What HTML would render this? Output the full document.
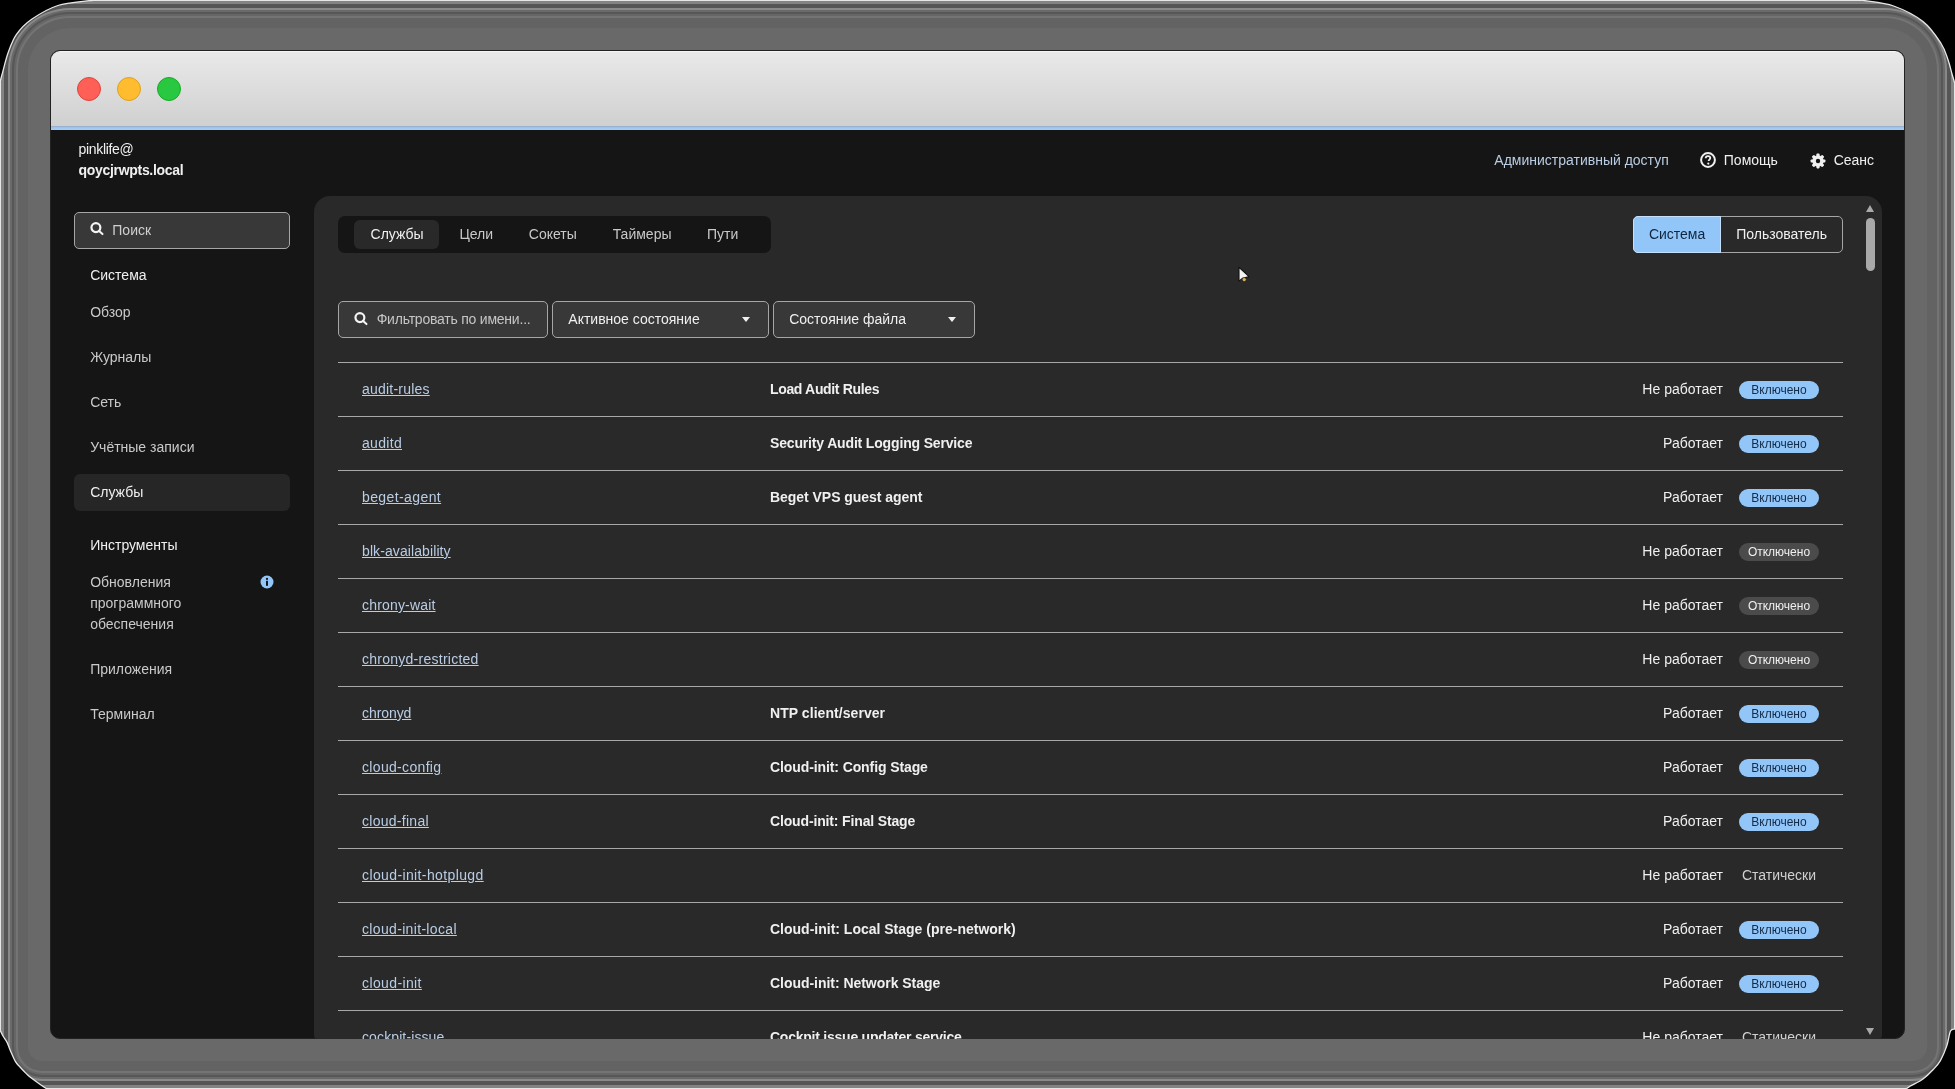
<!DOCTYPE html>
<html><head><meta charset="utf-8">
<style>
*{box-sizing:border-box;margin:0;padding:0}
html,body{width:1955px;height:1089px;overflow:hidden;background:#000;font-family:"Liberation Sans",sans-serif;font-size:14px}
#frame{position:absolute;left:0;top:0;width:1955px;height:1089px;border-radius:70px 70px 42px 42px;background:#696969;
 box-shadow:inset 0 0 0 1px #e6e6e6,inset 0 0 0 4px #838383,inset 0 0 0 8px #555,inset 0 0 0 10px #898989,inset 0 0 0 12px #6a6a6a,inset 0 0 0 14px #575757,inset 0 0 0 16px #666,inset 0 0 0 18px #747474,inset 0 0 0 28px #636363}
#win{position:absolute;left:50px;top:50px;width:1855px;height:989px;border-radius:10px;overflow:hidden;background:#151515;border:1px solid #222}
#title{position:absolute;left:0;top:0;width:100%;height:75px;background:linear-gradient(#e9e9e9,#d0d0d0);border-top:1px solid #f6f6f6}
#blue{position:absolute;left:0;top:75px;width:100%;height:4px;background:linear-gradient(#97a9c2,#9ec4ee 40%,#a6cefc)}
.tl{position:absolute;top:25px;width:24px;height:24px;border-radius:50%}
#app{will-change:transform;position:absolute;left:0;top:0;width:1955px;height:1089px;clip-path:inset(130px 50px 50px 50px round 0 0 10px 10px)}
.t{position:absolute;white-space:nowrap;line-height:16px;color:#f0f0f0}
.b{font-weight:bold}
.g{color:#c9c9c9}
.lnk{color:#b9cde4;text-decoration:underline;text-underline-offset:1px}
.box{position:absolute}
.panel{position:absolute;left:314px;top:196px;width:1568px;height:843px;background:#292929;border-radius:16px 16px 4px 4px}
.inp{position:absolute;border:1px solid #a6a6a6;border-radius:5px;background:#383838}
.line{position:absolute;left:338px;width:1505px;height:1px;background:#a8a8a8}
.badge{position:absolute;left:1739px;width:80px;height:18px;border-radius:9px;font-size:12px;line-height:18px;text-align:center}
.on{background:#92c5f8;color:#142c48}
.off{background:#4b4b4b;color:#f0f0f0}
.st{color:#d0d0d0;font-size:14px;line-height:16px;height:16px}
.caret{position:absolute;width:0;height:0;border-left:4.5px solid transparent;border-right:4.5px solid transparent;border-top:5px solid #f0f0f0}
</style></head>
<body>
<div id="frame"></div><svg style="position:absolute;left:0;top:0" width="1955" height="1089"><path d="M0.0 82.0 C0.5 80.3 1.4 76.5 2.8 71.6 C4.2 66.6 6.0 58.5 8.3 52.3 C10.6 46.1 12.6 39.9 16.5 34.4 C20.4 28.9 24.8 24.1 31.7 19.3 C38.6 14.5 48.3 8.6 57.9 5.5 C67.5 2.4 83.2 1.6 89.5 0.7 C95.8 -0.2 94.9 0.1 96.0 0.0  L0 0 Z" fill="#000"/><path d="M0.0 82.0 C0.5 80.3 1.4 76.5 2.8 71.6 C4.2 66.6 6.0 58.5 8.3 52.3 C10.6 46.1 12.6 39.9 16.5 34.4 C20.4 28.9 24.8 24.1 31.7 19.3 C38.6 14.5 48.3 8.6 57.9 5.5 C67.5 2.4 83.2 1.6 89.5 0.7 C95.8 -0.2 94.9 0.1 96.0 0.0 " fill="none" stroke="#e8e8e8" stroke-width="1.3"/><path d="M1859.0 0.0 C1859.9 0.1 1858.6 -0.4 1864.4 0.6 C1870.2 1.6 1883.8 2.5 1893.6 6.0 C1903.4 9.5 1915.1 15.3 1923.0 21.5 C1930.9 27.7 1936.6 36.6 1940.8 43.0 C1945.0 49.4 1946.1 54.5 1948.0 59.7 C1949.9 64.9 1950.8 70.0 1952.0 74.0 C1953.2 78.0 1954.5 82.3 1955.0 84.0  L1955 0 Z" fill="#000"/><path d="M1859.0 0.0 C1859.9 0.1 1858.6 -0.4 1864.4 0.6 C1870.2 1.6 1883.8 2.5 1893.6 6.0 C1903.4 9.5 1915.1 15.3 1923.0 21.5 C1930.9 27.7 1936.6 36.6 1940.8 43.0 C1945.0 49.4 1946.1 54.5 1948.0 59.7 C1949.9 64.9 1950.8 70.0 1952.0 74.0 C1953.2 78.0 1954.5 82.3 1955.0 84.0 " fill="none" stroke="#e8e8e8" stroke-width="1.3"/><path d="M0.0 1030.0 C0.5 1031.0 1.8 1033.9 3.0 1036.0 C4.2 1038.1 6.0 1040.1 7.2 1042.6 C8.4 1045.1 9.1 1047.8 10.5 1051.0 C11.9 1054.2 13.9 1059.0 15.5 1061.7 C17.1 1064.4 18.2 1065.0 20.0 1067.0 C21.8 1069.0 24.6 1071.9 26.3 1073.6 C28.0 1075.3 26.8 1074.6 30.0 1077.0 C33.2 1079.4 42.2 1086.0 45.4 1088.0 C48.6 1090.0 48.4 1088.8 49.0 1089.0  L0 1089 Z" fill="#000"/><path d="M0.0 1030.0 C0.5 1031.0 1.8 1033.9 3.0 1036.0 C4.2 1038.1 6.0 1040.1 7.2 1042.6 C8.4 1045.1 9.1 1047.8 10.5 1051.0 C11.9 1054.2 13.9 1059.0 15.5 1061.7 C17.1 1064.4 18.2 1065.0 20.0 1067.0 C21.8 1069.0 24.6 1071.9 26.3 1073.6 C28.0 1075.3 26.8 1074.6 30.0 1077.0 C33.2 1079.4 42.2 1086.0 45.4 1088.0 C48.6 1090.0 48.4 1088.8 49.0 1089.0 " fill="none" stroke="#e8e8e8" stroke-width="1.3"/><path d="M1906.0 1089.0 C1906.7 1088.5 1907.2 1088.0 1910.0 1086.3 C1912.8 1084.6 1919.2 1081.8 1923.0 1079.0 C1926.8 1076.2 1930.1 1072.9 1933.0 1069.8 C1935.9 1066.7 1938.1 1064.6 1940.4 1060.6 C1942.7 1056.6 1945.1 1050.8 1946.8 1045.9 C1948.5 1041.0 1949.1 1033.8 1950.5 1031.0 C1951.9 1028.2 1954.2 1029.3 1955.0 1029.0  L1955 1089 Z" fill="#000"/><path d="M1906.0 1089.0 C1906.7 1088.5 1907.2 1088.0 1910.0 1086.3 C1912.8 1084.6 1919.2 1081.8 1923.0 1079.0 C1926.8 1076.2 1930.1 1072.9 1933.0 1069.8 C1935.9 1066.7 1938.1 1064.6 1940.4 1060.6 C1942.7 1056.6 1945.1 1050.8 1946.8 1045.9 C1948.5 1041.0 1949.1 1033.8 1950.5 1031.0 C1951.9 1028.2 1954.2 1029.3 1955.0 1029.0 " fill="none" stroke="#e8e8e8" stroke-width="1.3"/></svg>
<div id="win">
 <div id="title">
  <div class="tl" style="left:26px;background:#fe5f57;border:1px solid #e0443e"></div>
  <div class="tl" style="left:66px;background:#febc2e;border:1px solid #dea123"></div>
  <div class="tl" style="left:106px;background:#28c840;border:1px solid #1aab29"></div>
 </div>
 <div id="blue"></div>
</div>
<div id="app">

<div class="t" style="left:78.6px;top:141.3px;letter-spacing:-0.349px;">pinklife@</div>
<div class="t b" style="left:78.6px;top:162.0px;letter-spacing:-0.313px;">qoycjrwpts.local</div>
<div class="t" style="left:1494.3px;top:152.0px;color:#b9cde4">Административный доступ</div>
<svg class="box" style="left:1700px;top:152px" width="16" height="16" viewBox="0 0 16 16"><circle cx="8" cy="8" r="6.9" fill="none" stroke="#f0f0f0" stroke-width="2"/><path d="M5.7 6.3 C5.7 4.9 6.7 4.1 8 4.1 C9.3 4.1 10.3 4.9 10.3 6.1 C10.3 7.5 8.6 7.6 8.6 9.1" fill="none" stroke="#f0f0f0" stroke-width="1.8"/><circle cx="8.3" cy="11.6" r="1.1" fill="#f0f0f0"/></svg>
<div class="t" style="left:1723.8px;top:152.0px;">Помощь</div>
<svg class="box" style="left:1810px;top:152.5px" width="16" height="16" viewBox="0 0 16 16"><g fill="#f0f0f0"><rect x="6.4" y="0.6" width="3.2" height="4" rx="0.8" transform="rotate(0 8 8)"/><rect x="6.4" y="0.6" width="3.2" height="4" rx="0.8" transform="rotate(45 8 8)"/><rect x="6.4" y="0.6" width="3.2" height="4" rx="0.8" transform="rotate(90 8 8)"/><rect x="6.4" y="0.6" width="3.2" height="4" rx="0.8" transform="rotate(135 8 8)"/><rect x="6.4" y="0.6" width="3.2" height="4" rx="0.8" transform="rotate(180 8 8)"/><rect x="6.4" y="0.6" width="3.2" height="4" rx="0.8" transform="rotate(225 8 8)"/><rect x="6.4" y="0.6" width="3.2" height="4" rx="0.8" transform="rotate(270 8 8)"/><rect x="6.4" y="0.6" width="3.2" height="4" rx="0.8" transform="rotate(315 8 8)"/><circle cx="8" cy="8" r="5.7"/></g><circle cx="8" cy="8" r="2.2" fill="#151515"/></svg>
<div class="t" style="left:1833.7px;top:152.0px;">Сеанс</div>
<div class="inp" style="left:74px;top:212px;width:216px;height:37px"></div>
<div class="box" style="left:90px;top:222px"><svg width="14" height="14" viewBox="0 0 14 14"><circle cx="5.9" cy="5.6" r="4.45" fill="none" stroke="#f4f4f4" stroke-width="2.2"/><path d="M9.1 8.9 L12.5 12.1" stroke="#f4f4f4" stroke-width="2" stroke-linecap="round"/></svg></div>
<div class="t" style="left:112.3px;top:222.1px;color:#cfcfcf">Поиск</div>
<div class="t" style="left:90.2px;top:266.8px;">Система</div>
<div class="t g" style="left:90.2px;top:304.3px;">Обзор</div>
<div class="t g" style="left:90.2px;top:349.1px;">Журналы</div>
<div class="t g" style="left:90.2px;top:393.9px;">Сеть</div>
<div class="t g" style="left:90.2px;top:438.7px;">Учётные записи</div>
<div class="box" style="left:74px;top:474px;width:216px;height:37px;background:#262626;border-radius:6px"></div>
<div class="t" style="left:90.2px;top:484.0px;">Службы</div>
<div class="t" style="left:90.2px;top:537.1px;">Инструменты</div>
<div class="t g" style="left:90.2px;top:573.9px;">Обновления</div>
<div class="t g" style="left:90.2px;top:595.0px;">программного</div>
<div class="t g" style="left:90.2px;top:615.6px;">обеспечения</div>
<div class="t g" style="left:90.2px;top:661.0px;">Приложения</div>
<div class="t g" style="left:90.2px;top:705.8px;">Терминал</div>
<svg class="box" style="left:259.5px;top:574.5px" width="14" height="14" viewBox="0 0 14 14"><circle cx="7" cy="7" r="6.5" fill="#92c5f8"/><rect x="6" y="5.8" width="2" height="5" fill="#151515"/><circle cx="7" cy="3.9" r="1.1" fill="#151515"/></svg>
<div class="panel"></div>
<div class="box" style="left:338px;top:216px;width:433px;height:37px;background:#151515;border-radius:7px"></div>
<div class="box" style="left:354px;top:220px;width:85px;height:29px;background:#292929;border-radius:6px"></div>
<div class="t" style="left:370.6px;top:226.1px;">Службы</div>
<div class="t g" style="left:459.4px;top:226.1px;">Цели</div>
<div class="t g" style="left:528.8px;top:226.1px;">Сокеты</div>
<div class="t g" style="left:612.7px;top:226.1px;">Таймеры</div>
<div class="t g" style="left:707px;top:226.1px;">Пути</div>
<div class="box" style="left:1633px;top:216px;width:210px;height:37px;border:1px solid #a6a6a6;border-radius:5px"></div>
<div class="box" style="left:1633px;top:216px;width:88px;height:37px;border:1px solid #c4e0fc;border-radius:5px 0 0 5px;background:#92c5f8"></div>
<div class="t" style="left:1648.9px;top:226.1px;color:#0f2540">Система</div>
<div class="t" style="left:1736.2px;top:226.3px;">Пользователь</div>
<div class="inp" style="left:338px;top:301px;width:210px;height:37px"></div>
<div class="box" style="left:354px;top:312px"><svg width="14" height="14" viewBox="0 0 14 14"><circle cx="5.9" cy="5.6" r="4.45" fill="none" stroke="#f4f4f4" stroke-width="2.2"/><path d="M9.1 8.9 L12.5 12.1" stroke="#f4f4f4" stroke-width="2" stroke-linecap="round"/></svg></div>
<div class="t" style="left:376.7px;top:310.8px;letter-spacing:-0.222px;color:#c6c6c6">Фильтровать по имени...</div>
<div class="inp" style="left:552px;top:301px;width:217px;height:37px"></div>
<div class="t" style="left:568.3px;top:310.8px;">Активное состояние</div>
<div class="caret" style="left:741.5px;top:317px"></div>
<div class="inp" style="left:773px;top:301px;width:202px;height:37px"></div>
<div class="t" style="left:789.2px;top:310.8px;">Состояние файла</div>
<div class="caret" style="left:947.5px;top:317px"></div>
<div class="line" style="top:362px"></div>
<div class="t lnk" style="left:362px;top:381.0px;letter-spacing:0.213px;">audit-rules</div>
<div class="t b" style="left:770px;top:381.0px;letter-spacing:-0.341px;">Load Audit Rules</div>
<div class="t" style="left:1523px;width:200px;text-align:right;top:381px">Не работает</div>
<div class="badge on" style="top:381px">Включено</div>
<div class="line" style="top:416px"></div>
<div class="t lnk" style="left:362px;top:435.0px;letter-spacing:0.311px;">auditd</div>
<div class="t b" style="left:770px;top:435.0px;letter-spacing:-0.162px;">Security Audit Logging Service</div>
<div class="t" style="left:1523px;width:200px;text-align:right;top:435px">Работает</div>
<div class="badge on" style="top:435px">Включено</div>
<div class="line" style="top:470px"></div>
<div class="t lnk" style="left:362px;top:489.0px;letter-spacing:0.397px;">beget-agent</div>
<div class="t b" style="left:770px;top:489.0px;letter-spacing:-0.038px;">Beget VPS guest agent</div>
<div class="t" style="left:1523px;width:200px;text-align:right;top:489px">Работает</div>
<div class="badge on" style="top:489px">Включено</div>
<div class="line" style="top:524px"></div>
<div class="t lnk" style="left:362px;top:543.0px;letter-spacing:0.097px;">blk-availability</div>
<div class="t" style="left:1523px;width:200px;text-align:right;top:543px">Не работает</div>
<div class="badge off" style="top:543px">Отключено</div>
<div class="line" style="top:578px"></div>
<div class="t lnk" style="left:362px;top:597.0px;letter-spacing:0.182px;">chrony-wait</div>
<div class="t" style="left:1523px;width:200px;text-align:right;top:597px">Не работает</div>
<div class="badge off" style="top:597px">Отключено</div>
<div class="line" style="top:632px"></div>
<div class="t lnk" style="left:362px;top:651.0px;letter-spacing:0.256px;">chronyd-restricted</div>
<div class="t" style="left:1523px;width:200px;text-align:right;top:651px">Не работает</div>
<div class="badge off" style="top:651px">Отключено</div>
<div class="line" style="top:686px"></div>
<div class="t lnk" style="left:362px;top:705.0px;letter-spacing:-0.068px;">chronyd</div>
<div class="t b" style="left:770px;top:705.0px;letter-spacing:0.057px;">NTP client/server</div>
<div class="t" style="left:1523px;width:200px;text-align:right;top:705px">Работает</div>
<div class="badge on" style="top:705px">Включено</div>
<div class="line" style="top:740px"></div>
<div class="t lnk" style="left:362px;top:759.0px;letter-spacing:0.328px;">cloud-config</div>
<div class="t b" style="left:770px;top:759.0px;letter-spacing:-0.100px;">Cloud-init: Config Stage</div>
<div class="t" style="left:1523px;width:200px;text-align:right;top:759px">Работает</div>
<div class="badge on" style="top:759px">Включено</div>
<div class="line" style="top:794px"></div>
<div class="t lnk" style="left:362px;top:813.0px;letter-spacing:0.279px;">cloud-final</div>
<div class="t b" style="left:770px;top:813.0px;letter-spacing:-0.147px;">Cloud-init: Final Stage</div>
<div class="t" style="left:1523px;width:200px;text-align:right;top:813px">Работает</div>
<div class="badge on" style="top:813px">Включено</div>
<div class="line" style="top:848px"></div>
<div class="t lnk" style="left:362px;top:867.0px;letter-spacing:0.383px;">cloud-init-hotplugd</div>
<div class="t" style="left:1523px;width:200px;text-align:right;top:867px">Не работает</div>
<div class="t" style="left:1739px;width:80px;text-align:center;top:867px;color:#d0d0d0">Статически</div>
<div class="line" style="top:902px"></div>
<div class="t lnk" style="left:362px;top:921.0px;letter-spacing:0.335px;">cloud-init-local</div>
<div class="t b" style="left:770px;top:921.0px;letter-spacing:-0.002px;">Cloud-init: Local Stage (pre-network)</div>
<div class="t" style="left:1523px;width:200px;text-align:right;top:921px">Работает</div>
<div class="badge on" style="top:921px">Включено</div>
<div class="line" style="top:956px"></div>
<div class="t lnk" style="left:362px;top:975.0px;letter-spacing:0.386px;">cloud-init</div>
<div class="t b" style="left:770px;top:975.0px;letter-spacing:-0.038px;">Cloud-init: Network Stage</div>
<div class="t" style="left:1523px;width:200px;text-align:right;top:975px">Работает</div>
<div class="badge on" style="top:975px">Включено</div>
<div class="line" style="top:1010px"></div>
<div class="t lnk" style="left:362px;top:1029.0px;letter-spacing:0.115px;">cockpit-issue</div>
<div class="t b" style="left:770px;top:1029.0px;letter-spacing:-0.236px;">Cockpit issue updater service</div>
<div class="t" style="left:1523px;width:200px;text-align:right;top:1029px">Не работает</div>
<div class="t" style="left:1739px;width:80px;text-align:center;top:1029px;color:#d0d0d0">Статически</div>
<div class="box" style="left:1866px;top:205px;width:0;height:0;border-left:4.7px solid transparent;border-right:4.7px solid transparent;border-bottom:7px solid #a9a9a9"></div>
<div class="box" style="left:1866px;top:217.5px;width:9.3px;height:53.5px;border-radius:4.6px;background:#a9a9a9"></div>
<div class="box" style="left:1866px;top:1028px;width:0;height:0;border-left:4.7px solid transparent;border-right:4.7px solid transparent;border-top:7px solid #a9a9a9"></div>
<svg class="box" style="left:1237px;top:265px" width="16" height="20" viewBox="0 0 16 20"><path d="M2 2.4 L2 16.2 L5.6 13.2 L12 11.6 Z" fill="#f4f4f4" stroke="#111" stroke-width="1.1" stroke-linejoin="round"/><circle cx="7.2" cy="14.6" r="2" fill="#d8b060" stroke="#222" stroke-width="0.6"/></svg>
</div>
</body></html>
